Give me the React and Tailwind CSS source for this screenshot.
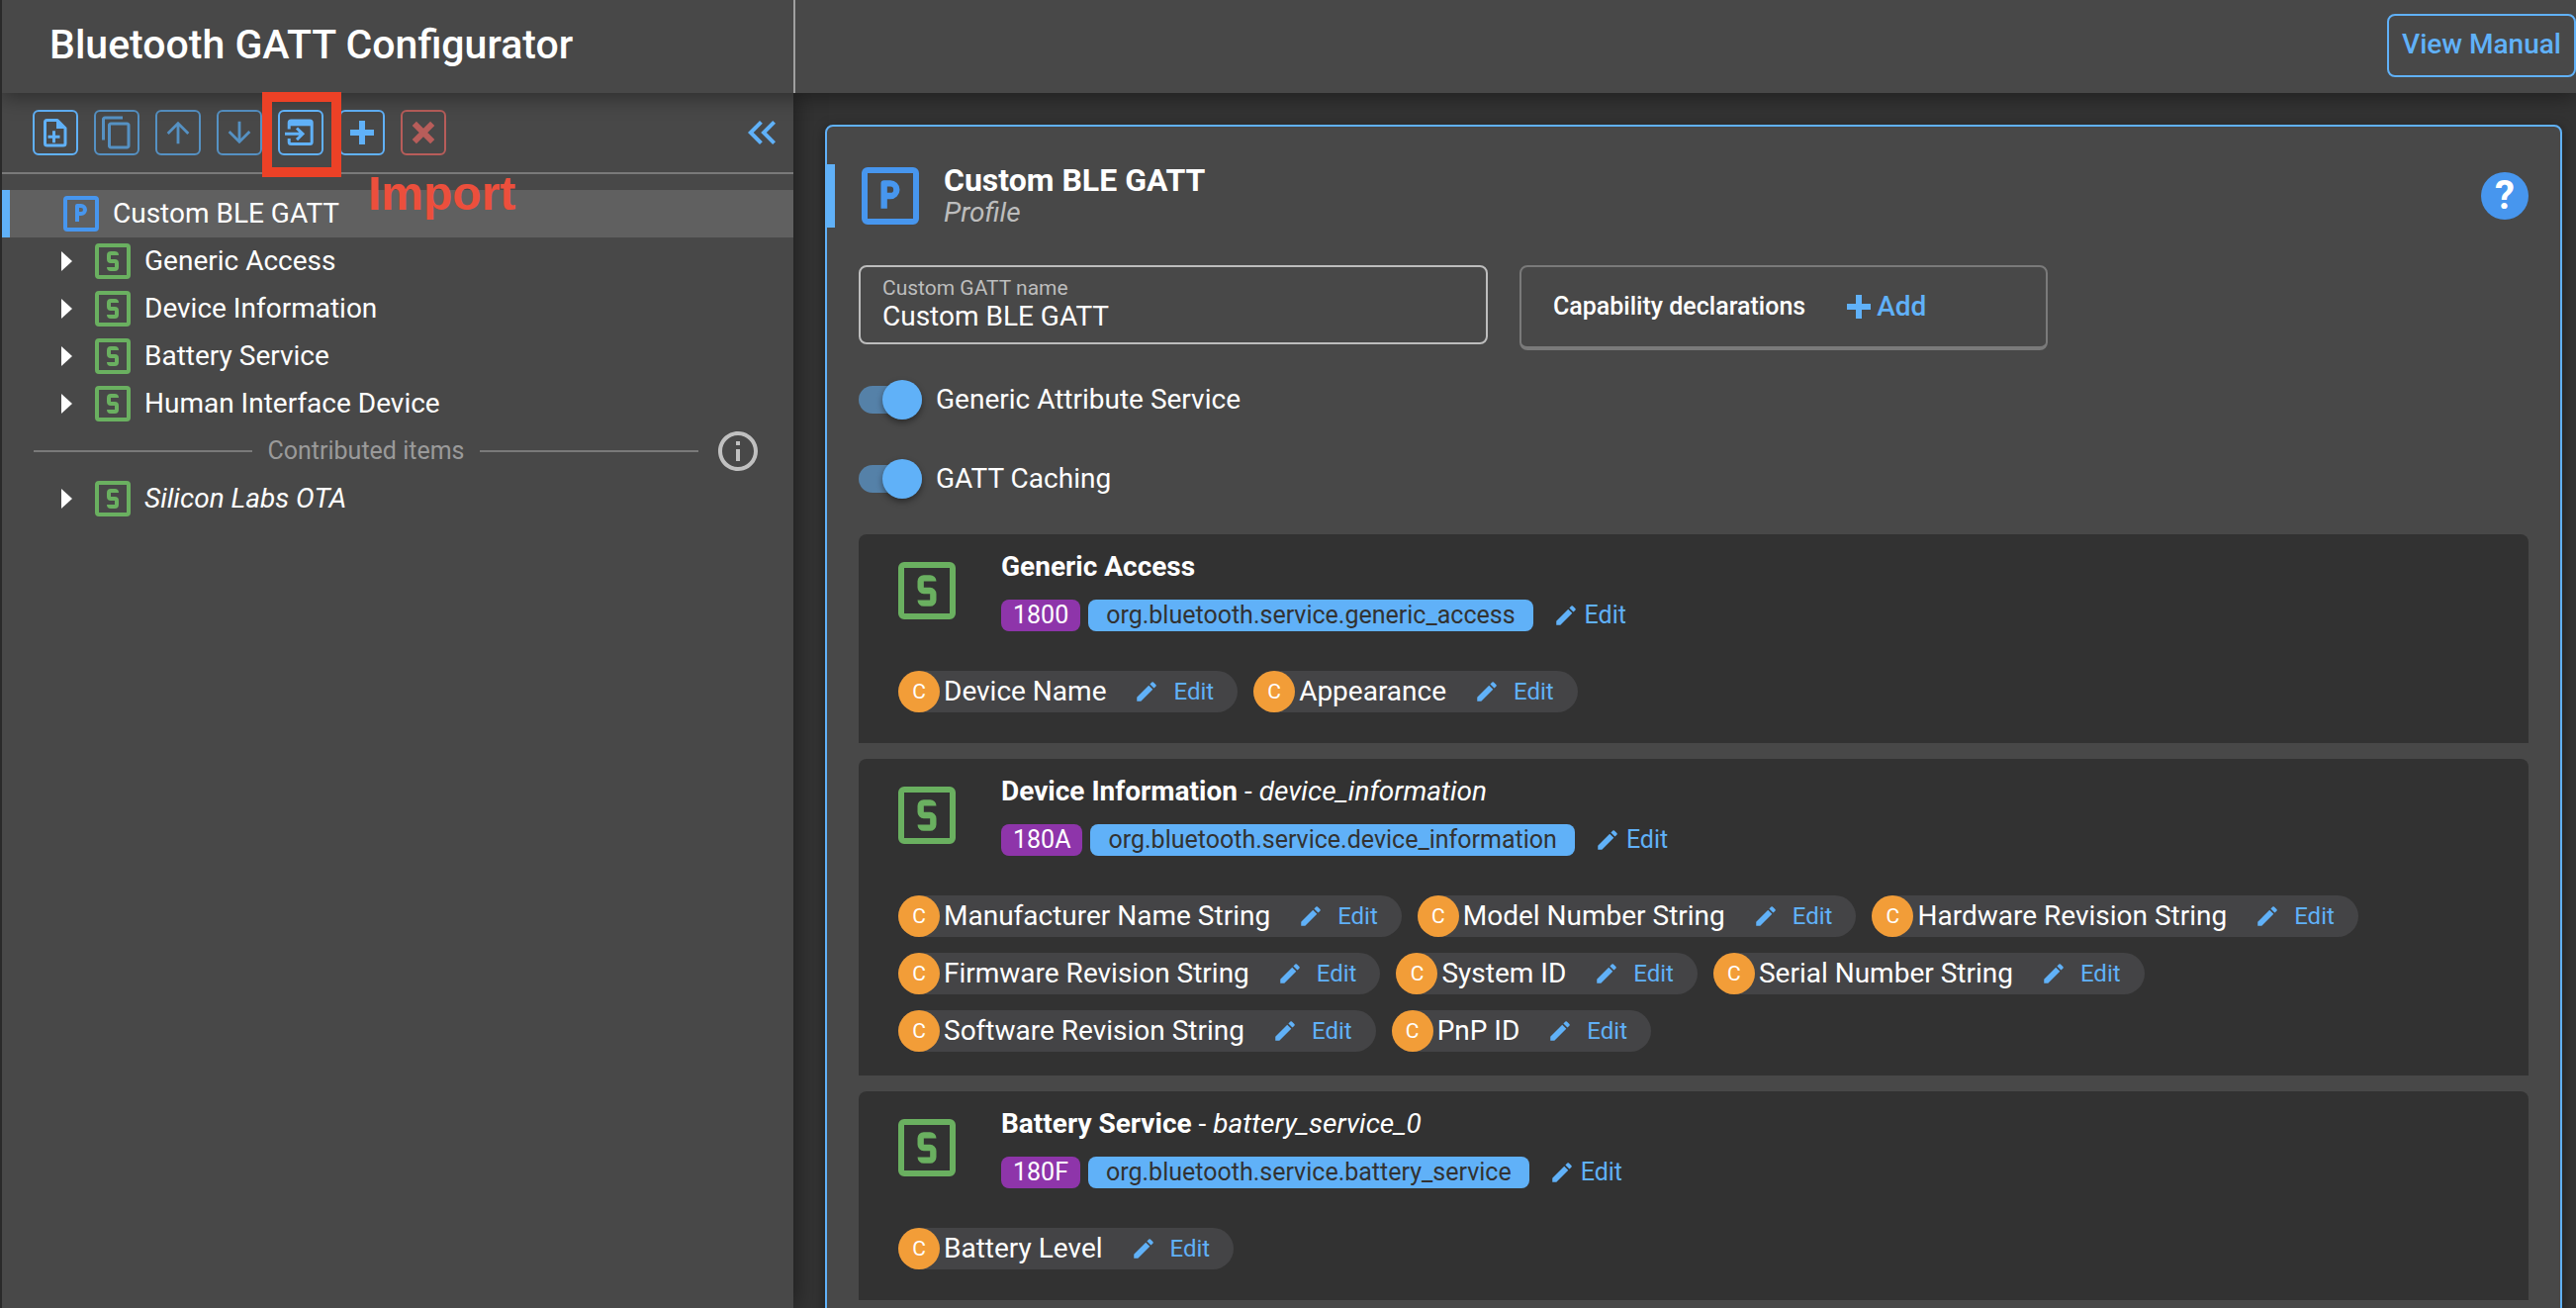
import React, { useState } from "react";
import {
  MdArrowDownward,
  MdArrowUpward,
  MdContentCopy,
  MdEdit,
  MdKeyboardDoubleArrowLeft,
  MdOutlineInfo,
} from "react-icons/md";
import { TbSquareLetterP, TbSquareLetterS } from "react-icons/tb";

const services = [
  {
    name: "Generic Access",
    uuid: "1800",
    type: "org.bluetooth.service.generic_access",
    characteristics: ["Device Name", "Appearance"],
  },
  {
    name: "Device Information",
    id: "device_information",
    uuid: "180A",
    type: "org.bluetooth.service.device_information",
    characteristics: [
      "Manufacturer Name String",
      "Model Number String",
      "Hardware Revision String",
      "Firmware Revision String",
      "System ID",
      "Serial Number String",
      "Software Revision String",
      "PnP ID",
    ],
  },
  {
    name: "Battery Service",
    id: "battery_service_0",
    uuid: "180F",
    type: "org.bluetooth.service.battery_service",
    characteristics: ["Battery Level"],
  },
];

const treeItems = ["Generic Access", "Device Information", "Battery Service", "Human Interface Device"];

function SmallBadge({ icon: Icon, className }) {
  return (
    <span
      className={`flex size-9 shrink-0 items-center justify-center overflow-hidden rounded-[4px] border-4 ${className}`}
    >
      <Icon className="size-12 shrink-0" strokeLinecap="butt" />
    </span>
  );
}

function LargeBadge({ icon: Icon, className }) {
  return (
    <span
      className={`flex size-[58px] shrink-0 items-center justify-center overflow-hidden rounded-[6px] border-[6px] ${className}`}
    >
      <Icon className="size-[76px] shrink-0" strokeLinecap="butt" />
    </span>
  );
}

function NewFileIcon() {
  return (
    <svg viewBox="0 0 46 46" className="size-[46px] shrink-0" fill="none" stroke="currentColor" strokeWidth="3">
      <path d="M25 10.5H14.5a2 2 0 0 0-2 2V34a2 2 0 0 0 2 2H31a2 2 0 0 0 2-2V18.5z" strokeLinejoin="round" />
      <path d="M24 9.5v9.5h10z" fill="currentColor" stroke="none" />
      <path d="M21.500 21.300v12M15.500 27.300h12" />
    </svg>
  );
}

function ImportIcon() {
  return (
    <svg viewBox="0 0 46 46" className="size-[46px] shrink-0" fill="none" stroke="currentColor" strokeWidth="3">
      <path d="M11.200 19.500V13a2 2 0 0 1 2-2h19a2 2 0 0 1 2 2v19.500a2 2 0 0 1-2 2h-19a2 2 0 0 1-2-2v-3.500" />
      <path d="M11 10h23v6.300H11z" fill="currentColor" stroke="none" />
      <path d="M7 24.300h17.500M19 18.500l6 5.800-6 5.800" />
    </svg>
  );
}

function PlusIcon({ className }) {
  return (
    <svg viewBox="0 0 24 24" className={className} fill="none" stroke="currentColor" strokeWidth="6">
      <path d="M12 0v24M0 12h24" />
    </svg>
  );
}

function CrossIcon() {
  return (
    <svg viewBox="0 0 24 24" className="size-6" fill="none" stroke="currentColor" strokeWidth="6">
      <path d="M2.800 2.800l18.400 18.400M21.200 2.800L2.800 21.200" />
    </svg>
  );
}

const toolClass = "flex size-[46px] shrink-0 items-center justify-center rounded-[6px] border-2";

function Toolbar() {
  return (
    <div className="flex h-[82px] items-center border-b-2 border-[#7a7a7a] pr-2 pl-[31px]">
      <div className="flex gap-4">
        <button aria-label="New" className={`${toolClass} border-[#60b1f8] text-[#60b1f8]`}>
          <NewFileIcon />
        </button>
        <button aria-label="Duplicate" className={`${toolClass} border-[#5591c3] text-[#5591c3]`}>
          <MdContentCopy className="size-9 shrink-0" />
        </button>
        <button aria-label="Move up" className={`${toolClass} border-[#5591c3] text-[#5591c3]`}>
          <MdArrowUpward className="size-[34px] shrink-0" />
        </button>
        <button aria-label="Move down" className={`${toolClass} border-[#5591c3] text-[#5591c3]`}>
          <MdArrowDownward className="size-[34px] shrink-0" />
        </button>
        <div className="relative z-20">
          <button aria-label="Import" className={`${toolClass} border-[#60b1f8] text-[#60b1f8]`}>
            <ImportIcon />
          </button>
          <span className="pointer-events-none absolute -top-[18px] -right-[18px] -bottom-[22px] -left-4 border-[10px] border-[#ec4126]" />
          <span className="pointer-events-none absolute top-[57px] left-[91px] font-['Liberation_Sans',Arial,sans-serif] text-[48px] leading-[56px] font-bold text-[#ec4f3c]">
            Import
          </span>
        </div>
        <button aria-label="Add item" className={`${toolClass} border-[#60b1f8] text-[#60b1f8]`}>
          <PlusIcon className="size-6" />
        </button>
        <button aria-label="Delete" className={`${toolClass} border-[#b85d5a] text-[#b85d5a]`}>
          <CrossIcon />
        </button>
      </div>
      <button aria-label="Collapse panel" className="ml-auto text-[#60b1f8]">
        <MdKeyboardDoubleArrowLeft className="size-12" />
      </button>
    </div>
  );
}

function TreeRow({ name, italic }) {
  return (
    <li className="flex h-12 items-center pl-[60px]">
      <button aria-label={`Expand ${name}`} className="mr-[23px]">
        <svg viewBox="0 0 11 20" className="h-5 w-[11px]" fill="white">
          <path d="M0 0l11 10L0 20z" />
        </svg>
      </button>
      <SmallBadge icon={TbSquareLetterS} className="border-[#6ab060] text-[#6ab060]" />
      <span className={italic ? "ml-[14px] italic" : "ml-[14px]"}>{name}</span>
    </li>
  );
}

function Sidebar() {
  return (
    <aside className="w-[800px] shrink-0 bg-[#484848] shadow-[0_0_24px_rgba(0,0,0,0.5)]">
      <Toolbar />
      <ul className="pt-4">
        <li className="flex h-12 items-center border-l-8 border-[#60b1f8] bg-[#606060] pl-[54px]">
          <SmallBadge icon={TbSquareLetterP} className="border-[#4796ee] text-[#4796ee]" />
          <span className="ml-[14px]">Custom BLE GATT</span>
        </li>
        {treeItems.map((name) => (
          <TreeRow key={name} name={name} />
        ))}
        <li className="flex h-12 items-center gap-4 pr-9 pl-8 text-[25px] text-[#9a9a9a]">
          <span className="h-0.5 flex-1 bg-[#7a7a7a]" />
          <span>Contributed items</span>
          <span className="h-0.5 flex-1 bg-[#7a7a7a]" />
          <MdOutlineInfo className="-mr-1 size-12 text-[#c0c0c0]" />
        </li>
        <TreeRow name="Silicon Labs OTA" italic />
      </ul>
    </aside>
  );
}

function Toggle({ label }) {
  const [on, setOn] = useState(true);
  return (
    <label className="flex h-20 w-fit items-center">
      <input type="checkbox" role="switch" className="peer sr-only" checked={on} onChange={() => setOn(!on)} />
      <span className="flex h-7 w-16 items-center rounded-full bg-[#777] peer-checked:justify-end peer-checked:bg-[#5581a8]">
        <span className="size-10 rounded-full bg-[#60b1f8] shadow-[0_3px_6px_rgba(0,0,0,0.4)]" />
      </span>
      <span className="ml-[14px]">{label}</span>
    </label>
  );
}

function Characteristic({ name }) {
  return (
    <li className="flex h-[42px] items-center rounded-full bg-[#444446] pr-6">
      <span className="mr-1 flex size-[42px] items-center justify-center rounded-full bg-[#f29d38] text-[21px]">C</span>
      <span>{name}</span>
      <button className="ml-7 flex items-center gap-[14px] text-[24px] text-[#60b1f8]">
        <MdEdit className="size-[26px]" />
        Edit
      </button>
    </li>
  );
}

function ServiceCard({ service }) {
  return (
    <section className="rounded-t-lg bg-[#323232] px-10 pt-4 pb-6">
      <div className="flex gap-[46px]">
        <LargeBadge icon={TbSquareLetterS} className="mt-3 border-[#6ab060] text-[#6ab060]" />
        <div>
          <h2 className="pt-px leading-8">
            <b className="font-bold">{service.name}</b>
            {service.id && (
              <span>
                {" "}
                - <i>{service.id}</i>
              </span>
            )}
          </h2>
          <div className="mt-[17px] flex h-8 items-center gap-2 text-[25px] leading-8">
            <span className="rounded-lg bg-[#8e35aa] px-3">{service.uuid}</span>
            <span className="rounded-lg bg-[#60b1f8] px-[18px] text-[#323232]">{service.type}</span>
            <button className="ml-3 flex items-center gap-1.5 text-[#60b1f8]">
              <MdEdit className="size-[26px]" />
              Edit
            </button>
          </div>
        </div>
      </div>
      <ul className="mt-10 flex min-h-[49px] flex-wrap content-start gap-4">
        {service.characteristics.map((name) => (
          <Characteristic key={name} name={name} />
        ))}
      </ul>
    </section>
  );
}

export default function App() {
  const [name, setName] = useState("Custom BLE GATT");
  return (
    <div className="flex h-screen flex-col overflow-hidden border-l-2 border-[#2a2a2a] bg-[#333333] font-['Roboto',sans-serif] text-[28px] leading-[36px] text-white">
      <header className="relative z-10 flex h-[94px] shrink-0 bg-[#484848] shadow-[0_4px_20px_rgba(0,0,0,0.4)]">
        <div className="flex w-[802px] shrink-0 items-center border-r-2 border-[#a0a0a0] pl-12">
          <h1 className="pb-1 text-[41px] leading-[48px] font-medium">Bluetooth GATT Configurator</h1>
        </div>
        <a
          href="#manual"
          className="mt-[14px] ml-auto flex h-16 items-center rounded-lg border-2 border-[#60b1f8] px-[13px] pb-0.5 font-medium text-[#60b1f8]"
        >
          View Manual
        </a>
      </header>

      <div className="flex min-h-0 flex-1">
        <Sidebar />
        <main className="min-w-0 flex-1 overflow-y-auto pt-8 pr-[14px] pl-8 [scrollbar-width:none]">
          <div className="rounded-lg border-2 border-[#60b1f8] bg-[#484848] px-8 pt-[38px] pb-8 shadow-[0_2px_12px_rgba(0,0,0,0.4)]">
            <div className="-ml-8 flex h-16 items-center">
              <span className="h-16 w-2 bg-[#60b1f8]" />
              <LargeBadge icon={TbSquareLetterP} className="ml-[27px] border-[#4796ee] text-[#4796ee]" />
              <div className="ml-[25px]">
                <h2 className="text-[32px] leading-[34px] font-bold">Custom BLE GATT</h2>
                <p className="leading-8 text-[#bdbdbd] italic">Profile</p>
              </div>
              <button
                aria-label="Help"
                className="ml-auto flex size-12 items-center justify-center rounded-full bg-[#4796ee] text-[40px] leading-none font-bold"
              >
                ?
              </button>
            </div>

            <div className="mt-[38px] flex items-start gap-8">
              <div className="flex h-20 w-[636px] flex-col rounded-lg border-2 border-[#bdbdbd] px-[22px] pt-[9px]">
                <label htmlFor="gatt-name" className="text-[21px] leading-6 text-[#bdbdbd]">
                  Custom GATT name
                </label>
                <input
                  id="gatt-name"
                  className="h-[34px] w-full bg-transparent leading-[34px] outline-none"
                  value={name}
                  onChange={(e) => setName(e.target.value)}
                />
              </div>
              <div className="flex h-[86px] w-[534px] items-center rounded-lg border-2 border-b-4 border-[#7a7a7a] px-8 font-medium">
                <span className="text-[25px]">Capability declarations</span>
                <button className="ml-[42px] flex items-center gap-1.5 text-[#60b1f8]">
                  <PlusIcon className="size-6" />
                  Add
                </button>
              </div>
            </div>

            <div className="mt-[10px]">
              <Toggle label="Generic Attribute Service" />
              <Toggle label="GATT Caching" />
            </div>

            <div className="mt-4 flex flex-col gap-4">
              {services.map((service) => (
                <ServiceCard key={service.uuid} service={service} />
              ))}
            </div>
          </div>
        </main>
      </div>
    </div>
  );
}
